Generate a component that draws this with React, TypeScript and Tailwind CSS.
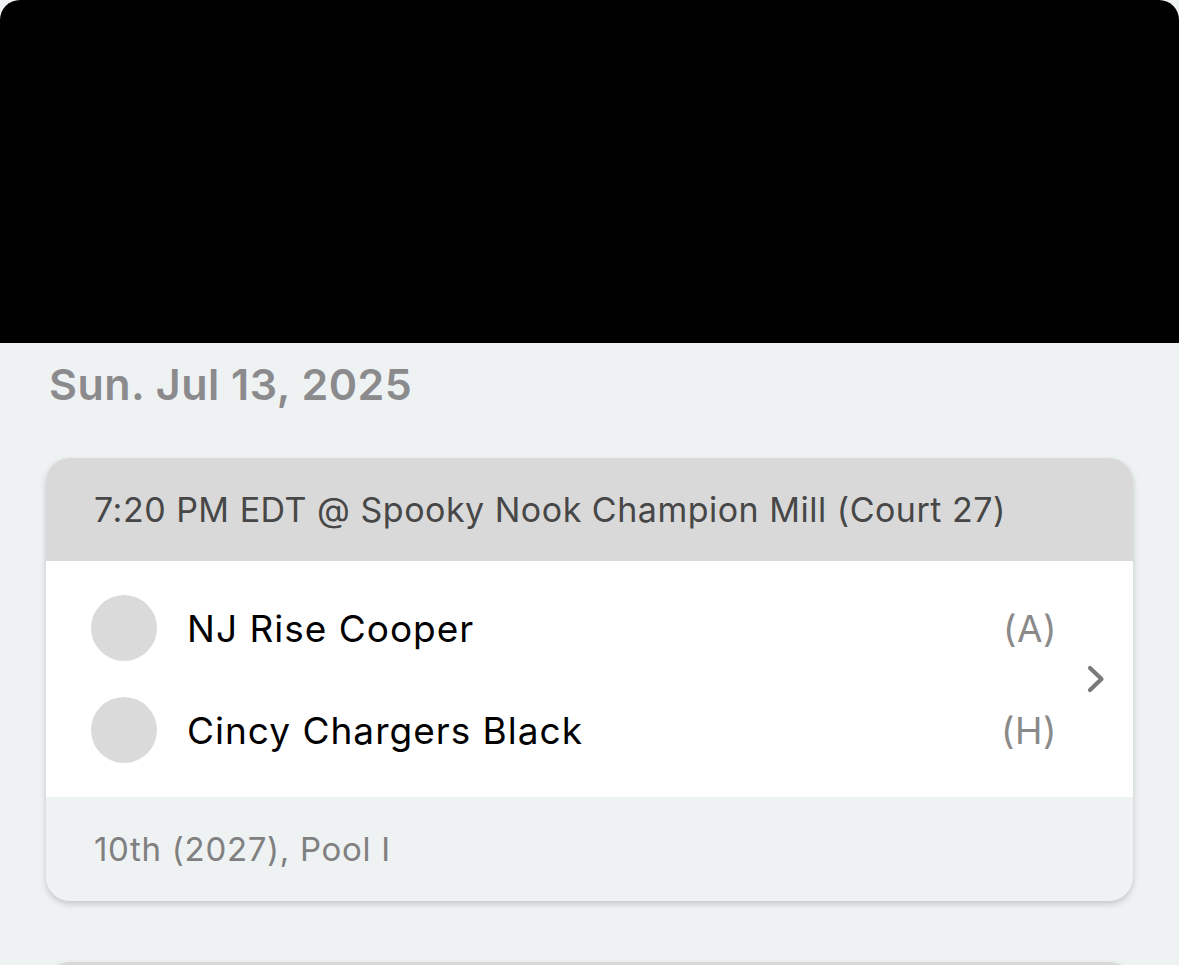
import React from "react";

function TeamRow({ name, tag }: { name: string; tag: string }) {
  return (
    <div className="flex items-center h-[102px]">
      <div className="w-[66px] h-[66px] rounded-full bg-[#dadada] shrink-0" />
      <div className="ml-[30px] text-[37px] text-black leading-none tracking-[1px]">{name}</div>
      <div className="ml-auto text-[37px] text-[#8a8a8a] leading-none tracking-[0.5px]">{tag}</div>
    </div>
  );
}

export default function App() {
  return (
    <div
      className="w-full h-[965px] bg-[#eff2f3] overflow-hidden"
      style={{ fontFamily: "Inter, 'Noto Sans', sans-serif" }}
    >
      <div className="h-[343px] bg-black rounded-t-[20px]" />
      <div className="pl-[49px] pt-[17px] h-[115px]">
        <div className="text-[43px] font-semibold text-[#8b8a8d] leading-[48px] tracking-[0.5px]">
          Sun. Jul 13, 2025
        </div>
      </div>
      <div className="mx-[46px] rounded-[24px] bg-[#eff2f3] shadow-[0_3px_6px_rgba(0,0,0,0.18)] overflow-hidden">
        <div className="h-[103px] bg-[#d9d9d9] flex items-center pl-[48px]">
          <span className="text-[34px] text-[#474747] leading-none tracking-[0.5px]">
            7:20 PM EDT @ Spooky Nook Champion Mill (Court 27)
          </span>
        </div>
        <div className="bg-white h-[236px] flex items-center pl-[45px] pr-[26px]">
          <div className="flex-1 flex flex-col py-[16px]">
            <TeamRow name="NJ Rise Cooper" tag="(A)" />
            <TeamRow name="Cincy Chargers Black" tag="(H)" />
          </div>
          <svg width="22" height="30" viewBox="0 0 22 30" className="ml-[28px] shrink-0">
            <path d="M5 4 L16.5 15 L5 26" fill="none" stroke="#7a7a7a" strokeWidth="4.2" strokeLinecap="round" strokeLinejoin="round" />
          </svg>
        </div>
        <div className="h-[104px] flex items-center pl-[48px]">
          <span className="text-[33px] text-[#808080] leading-none tracking-[0.7px]">10th (2027), Pool I</span>
        </div>
      </div>
      <div className="mx-[46px] mt-[61px] h-[80px] rounded-t-[24px] bg-[#d9d9d9] shadow-[0_3px_6px_rgba(0,0,0,0.18)]" />
    </div>
  );
}
